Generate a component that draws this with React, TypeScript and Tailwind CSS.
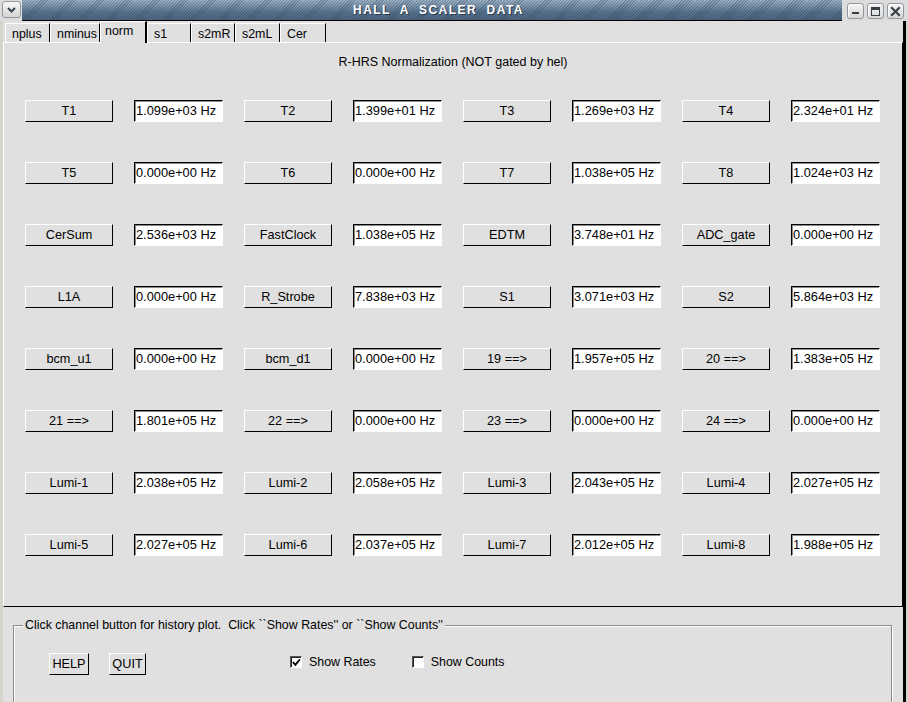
import React from "react";

const rows: [string, string][][] = [
  [["T1", "1.099e+03 Hz"], ["T2", "1.399e+01 Hz"], ["T3", "1.269e+03 Hz"], ["T4", "2.324e+01 Hz"]],
  [["T5", "0.000e+00 Hz"], ["T6", "0.000e+00 Hz"], ["T7", "1.038e+05 Hz"], ["T8", "1.024e+03 Hz"]],
  [["CerSum", "2.536e+03 Hz"], ["FastClock", "1.038e+05 Hz"], ["EDTM", "3.748e+01 Hz"], ["ADC_gate", "0.000e+00 Hz"]],
  [["L1A", "0.000e+00 Hz"], ["R_Strobe", "7.838e+03 Hz"], ["S1", "3.071e+03 Hz"], ["S2", "5.864e+03 Hz"]],
  [["bcm_u1", "0.000e+00 Hz"], ["bcm_d1", "0.000e+00 Hz"], ["19 ==>", "1.957e+05 Hz"], ["20 ==>", "1.383e+05 Hz"]],
  [["21 ==>", "1.801e+05 Hz"], ["22 ==>", "0.000e+00 Hz"], ["23 ==>", "0.000e+00 Hz"], ["24 ==>", "0.000e+00 Hz"]],
  [["Lumi-1", "2.038e+05 Hz"], ["Lumi-2", "2.058e+05 Hz"], ["Lumi-3", "2.043e+05 Hz"], ["Lumi-4", "2.027e+05 Hz"]],
  [["Lumi-5", "2.027e+05 Hz"], ["Lumi-6", "2.037e+05 Hz"], ["Lumi-7", "2.012e+05 Hz"], ["Lumi-8", "1.988e+05 Hz"]],
];

const tabs: { name: string; w: string }[] = [
  { name: "nplus", w: "w-[45px]" },
  { name: "nminus", w: "w-[50px]" },
  { name: "norm", w: "w-[47px]" },
  { name: "s1", w: "w-[44px]" },
  { name: "s2mR", w: "w-[44px]" },
  { name: "s2mL", w: "w-[45px]" },
  { name: "Cer", w: "w-[46px]" },
];

function TkButton({ label, className }: { label: string; className: string }) {
  return (
    <div
      className={`flex items-center justify-center border border-t-white border-l-white border-r-black border-b-black bg-[#e0e0e0] text-[12.7px] leading-none text-black whitespace-pre ${className}`}
    >
      {label}
    </div>
  );
}

function Entry({ value }: { value: string }) {
  return (
    <div className="flex h-[22px] w-[89px] items-center border border-t-black border-l-black border-r-white border-b-white bg-white pl-[1px] text-[12.8px] leading-none text-black whitespace-pre shadow-[inset_1px_1px_0_#8a8a8a]">
      {value}
    </div>
  );
}

function CheckBox({ checked, label }: { checked: boolean; label: string }) {
  return (
    <div className="flex items-center">
      <div className="flex h-[12px] w-[12px] items-center justify-center border border-t-[#555] border-l-[#555] border-r-white border-b-white bg-white shadow-[inset_1px_1px_0_#222]">
        {checked && (
          <svg width="9" height="9" viewBox="0 0 9 9">
            <path d="M1 4.2 L3.4 6.8 L8 1.2" stroke="#000" strokeWidth="1.8" fill="none" />
          </svg>
        )}
      </div>
      <span className="ml-[7px] text-[12.4px] leading-none text-black">{label}</span>
    </div>
  );
}

function WinButton({ kind }: { kind: "min" | "max" | "close" }) {
  return (
    <div className="flex h-[16px] w-[17px] items-center justify-center rounded-[3px] border border-[#8f98a1] bg-[linear-gradient(to_bottom,#f4f4f4,#d8d8d8)] shadow-[inset_1px_1px_0_#fff]">
      <svg width="11" height="11" viewBox="0 0 11 11">
        {kind === "min" && <rect x="2" y="6" width="7" height="2" fill="#3a3f44" />}
        {kind === "max" && (
          <>
            <rect x="1.5" y="1.5" width="8" height="8" fill="none" stroke="#3a3f44" strokeWidth="1" />
            <rect x="1.5" y="1.5" width="8" height="2.5" fill="#3a3f44" />
          </>
        )}
        {kind === "close" && (
          <path d="M2 2 L9 9 M9 2 L2 9" stroke="#3a3f44" strokeWidth="2.2" strokeLinecap="square" />
        )}
      </svg>
    </div>
  );
}

export default function App() {
  return (
    <div className="flex h-[702px] w-[908px] flex-col overflow-hidden bg-[#e0e0e0] font-['Liberation_Sans',Arial,sans-serif] text-black">
      {/* Title bar */}
      <div className="flex h-[21px] shrink-0">
        <div className="flex w-[22px] items-start justify-start bg-[#dcdcdc] pl-[2px] pt-[1px]">
          <div className="flex h-[17px] w-[19px] items-center justify-center rounded-[3px] border border-[#8f98a1] bg-[linear-gradient(to_bottom,#f6f6f6,#d6d6d6)]">
            <svg width="11" height="8" viewBox="0 0 11 8">
              <path d="M2 2 L5.5 5.5 L9 2" stroke="#3c4450" strokeWidth="2" fill="none" />
            </svg>
          </div>
        </div>
        <div className="flex flex-1 items-center justify-center border-b border-black bg-[image:repeating-linear-gradient(135deg,rgba(35,55,78,0.32)_0px,rgba(35,55,78,0.32)_1px,transparent_1px,transparent_2.2px),linear-gradient(to_bottom,#9fb3c6_0%,#7690a8_35%,#5a748e_60%,#4c6681_100%)] pl-[13px]">
          <span className="whitespace-pre text-[12px] font-bold leading-none tracking-[1.45px] text-white [text-shadow:1px_1px_0_#2a3a4c]">
            {"HALL  A  SCALER  DATA"}
          </span>
        </div>
        <div className="flex w-[66px] items-start gap-[3px] bg-[#dcdcdc] pl-[5px] pt-[3px]">
          <WinButton kind="min" />
          <WinButton kind="max" />
          <WinButton kind="close" />
        </div>
      </div>

      {/* Body */}
      <div className="flex flex-1">
        <div className="w-[3px] bg-[#d4d4cc]" />
        <div className="flex w-[900px] flex-col">
          {/* Tabs */}
          <div className="flex h-[21px] items-end pl-[2px]">
            {tabs.map((t) => {
              const sel = t.name === "norm";
              return sel ? (
                <div
                  key={t.name}
                  className={`relative z-10 -mb-px flex h-[22px] items-start rounded-tl-[2px] border-l border-t border-r-2 border-l-white border-t-white border-r-black bg-[#e0e0e0] pl-[4px] pt-[3px] text-[12.4px] leading-none ${t.w}`}
                >
                  {t.name}
                </div>
              ) : (
                <div
                  key={t.name}
                  className={`flex h-[19px] items-center rounded-tl-[2px] border-l border-t border-r border-l-white border-t-white border-r-black bg-[#e0e0e0] pl-[6px] pt-[2px] text-[12.4px] leading-none ${t.w}`}
                >
                  {t.name}
                </div>
              );
            })}
          </div>

          {/* Main panel */}
          <div className="flex h-[565px] flex-col items-stretch border border-t-white border-l-white border-r-black border-b-black">
            <div className="pt-[12px] text-center text-[12.5px] leading-[14px]">
              R-HRS Normalization (NOT gated by hel)
            </div>
            <div className="mt-[31px] grid grid-cols-[88px_89px_88px_89px_88px_89px_88px_89px] gap-x-[21px] gap-y-[40px] pl-[21px]">
              {rows.map((r) =>
                r.map(([lab, val]) => (
                  <React.Fragment key={lab}>
                    <TkButton label={lab} className="h-[22px] w-[88px]" />
                    <Entry value={val} />
                  </React.Fragment>
                ))
              )}
            </div>
          </div>

          {/* Bottom section */}
          <div className="flex-1 pl-[10px]">
            <fieldset className="mt-[11px] h-[100px] w-[879px] border border-[#8a8a8a] shadow-[inset_1px_1px_0_#fff,1px_1px_0_#fff]">
              <legend className="ml-[9px] bg-[#e0e0e0] px-[2px] text-[12.4px] leading-[14px] whitespace-pre">
                {"Click channel button for history plot.  Click ``Show Rates'' or ``Show Counts''"}
              </legend>
              <div className="mt-[21px] flex items-center pl-[35px]">
                <TkButton label="HELP" className="h-[22px] w-[40px]" />
                <TkButton label="QUIT" className="ml-[20px] h-[22px] w-[37px]" />
                <div className="ml-[144px] mt-[-4px]">
                  <CheckBox checked label="Show Rates" />
                </div>
                <div className="ml-[36px] mt-[-4px]">
                  <CheckBox checked={false} label="Show Counts" />
                </div>
              </div>
            </fieldset>
          </div>
        </div>
        <div className="w-[3px] bg-black" />
        <div className="w-[2px] bg-[#d4d4cc]" />
      </div>
    </div>
  );
}
